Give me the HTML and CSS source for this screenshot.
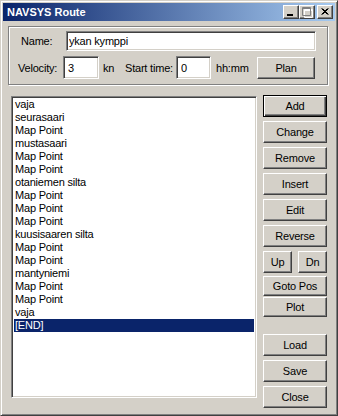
FILE: index.html
```html
<!DOCTYPE html>
<html lang="en">
<head>
    <meta charset="UTF-8">
    <title>NAVSYS Route</title>
    <link rel="stylesheet" href="styles.css">
</head>
<body>
    <div class="window">
        <div class="titlebar">
            <span class="title">NAVSYS Route</span>
            <div class="caption-btns">
                <span class="cap-btn">
                    <svg width="14" height="12" viewBox="0 0 14 12"><rect x="3" y="8" width="6" height="2" fill="#000"/></svg>
                </span>
                <span class="cap-btn">
                    <svg width="14" height="12" viewBox="0 0 14 12">
                        <path d="M3.5 2.5h8v8h-8z M3 3.5h9" fill="none" stroke="#fff" stroke-width="1" transform="translate(1 1)"/>
                        <path d="M2.5 1.5h8v8h-8z M2 2.5h9" fill="none" stroke="#808080" stroke-width="1"/>
                    </svg>
                </span>
                <span class="cap-btn close">
                    <svg width="14" height="12" viewBox="0 0 14 12"><path d="M3.5 2.5l6 6M4.5 2.5l6 6M9.5 2.5l-6 6M10.5 2.5l-6 6" stroke="#000" stroke-width="1"/></svg>
                </span>
            </div>
        </div>

        <div class="client">
            <div class="group">
                <div class="row">
                    <label class="lbl lbl-name">Name:</label>
                    <input type="text" class="field field-name" value="ykan kymppi">
                </div>
                <div class="row row-vel">
                    <label class="lbl lbl-vel">Velocity:</label>
                    <input type="text" class="field field-vel" value="3">
                    <span class="lbl lbl-kn">kn</span>
                    <label class="lbl lbl-start">Start time:</label>
                    <input type="text" class="field field-start" value="0">
                    <span class="lbl lbl-hhmm">hh:mm</span>
                    <button class="btn btn-plan">Plan</button>
                </div>
            </div>

            <div class="main">
                <div class="listbox">
                    <div class="item">vaja</div>
                    <div class="item">seurasaari</div>
                    <div class="item">Map Point</div>
                    <div class="item">mustasaari</div>
                    <div class="item">Map Point</div>
                    <div class="item">Map Point</div>
                    <div class="item">otaniemen silta</div>
                    <div class="item">Map Point</div>
                    <div class="item">Map Point</div>
                    <div class="item">Map Point</div>
                    <div class="item">kuusisaaren silta</div>
                    <div class="item">Map Point</div>
                    <div class="item">Map Point</div>
                    <div class="item">mantyniemi</div>
                    <div class="item">Map Point</div>
                    <div class="item">Map Point</div>
                    <div class="item">vaja</div>
                    <div class="item selected">[END]</div>
                </div>

                <div class="btn-col">
                    <button class="btn default">Add</button>
                    <button class="btn">Change</button>
                    <button class="btn">Remove</button>
                    <button class="btn">Insert</button>
                    <button class="btn">Edit</button>
                    <button class="btn">Reverse</button>
                    <div class="btn-pair">
                        <button class="btn">Up</button>
                        <button class="btn">Dn</button>
                    </div>
                    <button class="btn btn-small btn-goto">Goto Pos</button>
                    <button class="btn btn-small btn-plot">Plot</button>
                    <button class="btn btn-load">Load</button>
                    <button class="btn">Save</button>
                    <button class="btn">Close</button>
                </div>
            </div>
        </div>
    </div>
</body>
</html>
```

FILE: styles.css
```css
* {
    margin: 0;
    padding: 0;
    box-sizing: border-box;
    font-family: 'Liberation Sans', Arial, sans-serif;
    font-size: 11px;
    letter-spacing: -0.2px;
}
body {
    background: #d4d0c8;
}
.window {
    width: 338px;
    height: 416px;
    background: #d4d0c8;
    border: 1px solid;
    border-color: #d4d0c8 #404040 #404040 #d4d0c8;
    box-shadow: inset 1px 1px #fff, inset -1px -1px #808080;
    padding: 2px;
    display: flex;
    flex-direction: column;
}
.titlebar {
    height: 18px;
    background: linear-gradient(to right, #0a246a, #a6caf0);
    display: flex;
    align-items: center;
    padding: 0 2px;
}
.title {
    color: #fff;
    font-weight: bold;
    letter-spacing: 0;
    padding-left: 2px;
}
.caption-btns {
    margin-left: auto;
    display: flex;
}
.cap-btn {
    width: 16px;
    height: 14px;
    background: #d4d0c8;
    border: 1px solid;
    border-color: #fff #404040 #404040 #fff;
    box-shadow: inset -1px -1px #808080;
    display: flex;
}
.cap-btn.close {
    margin-left: 2px;
}
.client {
    padding: 5px 0 0 5px;
}
.group {
    width: 320px;
    border: 1px solid #808080;
    box-shadow: inset 1px 1px #fff, 1px 1px #fff;
    padding: 4px 0 5px 0;
}
.row {
    display: flex;
    align-items: center;
    height: 20px;
}
.row-vel {
    height: 23px;
    margin-top: 5px;
}
.lbl {
    color: #000;
    white-space: nowrap;
}
.lbl-name {
    margin-left: 12px;
    width: 45px;
}
.lbl-vel {
    margin-left: 9px;
    width: 45px;
}
.lbl-kn {
    margin-left: 4px;
    width: 22px;
}
.lbl-start {
    width: 51px;
}
.lbl-hhmm {
    margin-left: 5px;
    width: 36px;
}
.field {
    height: 20px;
    background: #fff;
    border: 1px solid;
    border-color: #808080 #fff #fff #808080;
    box-shadow: inset 1px 1px #404040, inset -1px -1px #d4d0c8;
    padding: 0 2px;
    color: #000;
    outline: none;
}
.field-name {
    width: 250px;
}
.field-vel {
    width: 36px;
    height: 23px;
    padding-left: 4px;
}
.field-start {
    width: 35px;
    height: 23px;
    padding-left: 4px;
}
.btn {
    height: 22px;
    background: #d4d0c8;
    border: 1px solid;
    border-color: #fff #404040 #404040 #fff;
    box-shadow: inset -1px -1px #808080;
    color: #000;
    font-weight: normal;
    cursor: pointer;
}
.btn.default {
    border: 1px solid #000;
    box-shadow: inset 1px 1px #fff, inset -1px -1px #404040, inset -2px -2px #808080;
}
.btn-plan {
    margin-left: 5px;
    width: 58px;
}
.main {
    display: flex;
    align-items: flex-start;
    margin-top: 10px;
}
.listbox {
    margin: 1px 0 0 3px;
    width: 246px;
    height: 302px;
    background: #fff;
    border: 1px solid;
    border-color: #808080 #fff #fff #808080;
    box-shadow: inset 1px 1px #404040, inset -1px -1px #d4d0c8;
    padding: 1px 2px 0 2px;
}
.item {
    height: 13px;
    line-height: 13px;
    padding-left: 1px;
    color: #000;
    white-space: nowrap;
}
.item.selected {
    background: #0a246a;
    color: #fff;
}
.btn-col {
    margin-left: 6px;
    width: 64px;
    display: flex;
    flex-direction: column;
    gap: 4px;
}
.btn-pair {
    display: flex;
    justify-content: space-between;
}
.btn-pair .btn {
    width: 29px;
}
.btn-small {
    height: 20px;
}
.btn-goto {
    margin-top: -1px;
}
.btn-plot {
    margin-top: -3px;
}
.btn-load {
    margin-top: 13px;
}
```
